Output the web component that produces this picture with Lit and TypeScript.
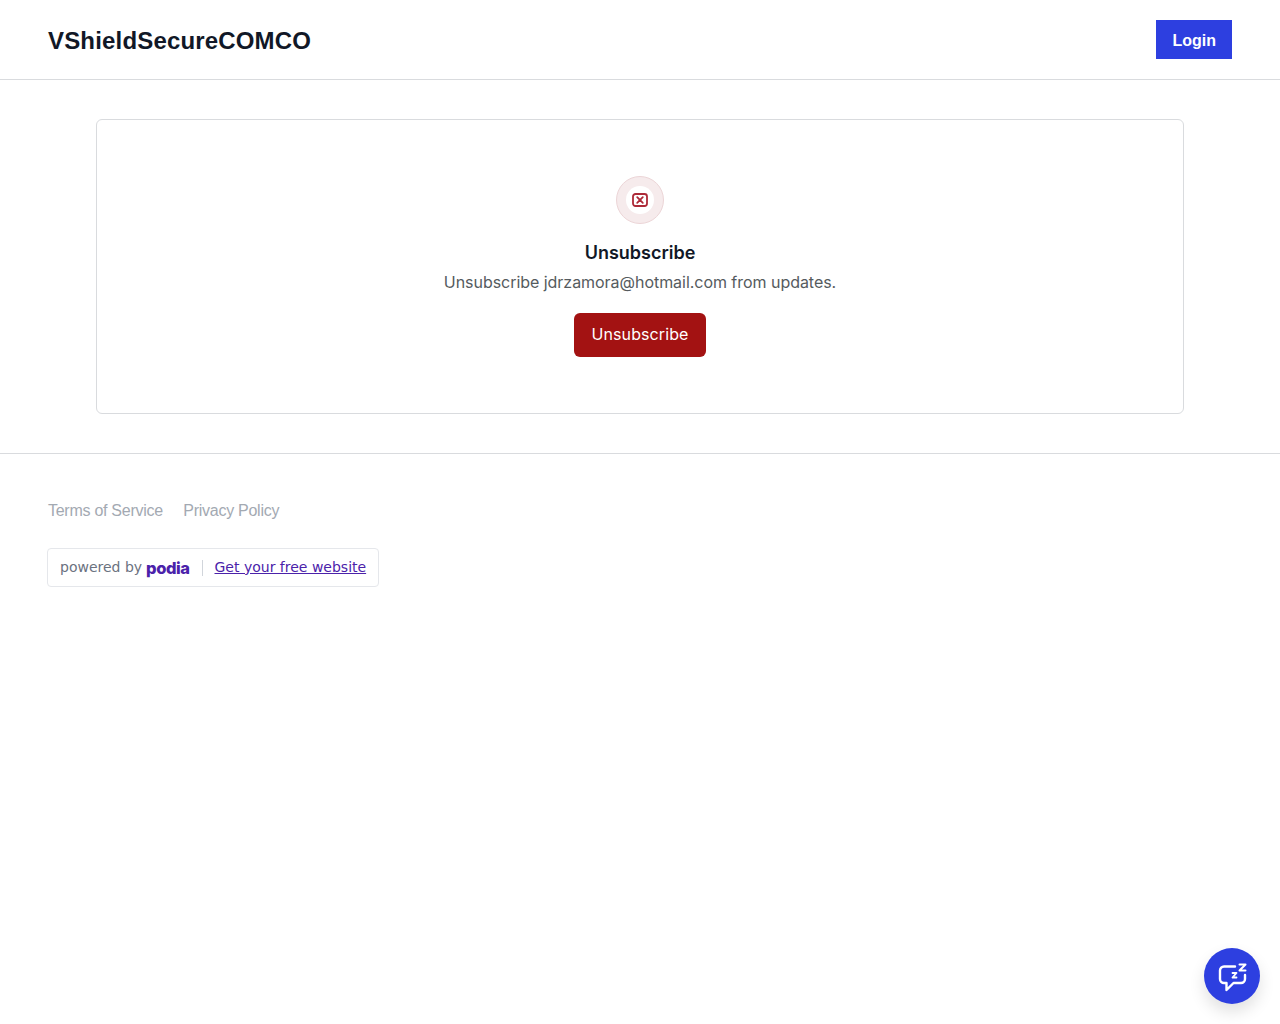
import { LitElement, html, css } from "lit";
import { customElement } from "lit/decorators.js";

@customElement("app-root")
export class AppRoot extends LitElement {
  static styles = css`
    :host { display: block; font-family: Inter, sans-serif; color: #111827; background: #fff; min-height: 1024px; }
    a { text-decoration: none; }
    .header { display: flex; justify-content: space-between; align-items: center; height: 79px; padding: 0 48px; border-bottom: 1px solid #d9dbde; font-family: "Liberation Sans", Arial, sans-serif; }
    .brand { font-size: 24px; font-weight: 700; color: #111827; letter-spacing: 0.17px; padding-top: 2px; }
    .login { display: block; background: #2d3fe0; color: #fff; font-size: 16px; font-weight: 700; line-height: 24px; padding: 9px 16px 6px; }
    .main { padding: 39px 96px; border-bottom: 1px solid #d9dbde; }
    .card { display: flex; flex-direction: column; align-items: center; border: 1px solid #d9dbde; border-radius: 6px; padding: 56px 0; height: 295px; box-sizing: border-box; }
    .ring { width: 48px; height: 48px; box-sizing: border-box; border-radius: 50%; border: 1px solid #ecd5d7; background: #f6ebec; display: flex; align-items: center; justify-content: center; }
    .inner { width: 28px; height: 28px; border-radius: 50%; background: #fff; display: flex; align-items: center; justify-content: center; }
    .inner svg { display: block; }
    h1 { margin: 16px 0 0; font-size: 18px; line-height: 26px; font-weight: 600; color: #111827; }
    .desc { margin: 4px 0 0; font-size: 16px; line-height: 24px; color: #555b5e; letter-spacing: -0.04px; }
    .action { margin-top: 19px; border: 0; background: #a31212; color: #fff; font: 400 16px/24px Inter, sans-serif; letter-spacing: 0.1px; height: 44px; width: 132px; border-radius: 6px; padding: 0 0 2px; }
    .footer { padding: 45px 48px 0; }
    .links { display: flex; gap: 20.5px; font-family: "Liberation Sans", Arial, sans-serif; font-size: 16px; line-height: 24px; letter-spacing: -0.27px; color: #a3a9b2; }
    .links a { color: #a3a9b2; }
    .badge { display: inline-flex; align-items: center; margin: 25px 0 0 -1px; height: 39px; box-sizing: border-box; padding: 0 12px 2px; border: 1px solid #e5e7eb; border-radius: 4px; font-family: "DejaVu Sans", sans-serif; font-size: 14px; color: #6b7280; }
    .podia { font-family: Inter, sans-serif; font-weight: 800; font-size: 16.500px; color: #4b22aa; margin-left: 4px; letter-spacing: -0.45px; position: relative; top: 1px; }
    .sep { width: 1px; height: 16px; background: #d1d5db; margin: 2px 12px 0; }
    .badge a { color: #4b22aa; text-decoration: underline; }
    .chat { position: fixed; right: 20px; bottom: 20px; width: 56px; height: 56px; border-radius: 50%; background: #2d3fe0; display: flex; align-items: center; justify-content: center; box-shadow: 0 8px 16px rgba(0,0,0,0.12); }
  `;

  render() {
    return html`
      <header class="header">
        <div class="brand">VShieldSecureCOMCO</div>
        <a class="login" href="#">Login</a>
      </header>
      <main class="main">
        <section class="card">
          <div class="ring">
            <div class="inner">
              <svg width="16" height="14" viewBox="0 0 16 14" fill="none" stroke="#ad2a38" stroke-width="1.800" stroke-linecap="round">
                <rect x="1" y="1" width="14" height="12" rx="2.500"></rect>
                <path d="M5.200 4.200l5.600 5.600M10.800 4.200l-5.600 5.600"></path>
              </svg>
            </div>
          </div>
          <h1>Unsubscribe</h1>
          <p class="desc">Unsubscribe jdrzamora@hotmail.com from updates.</p>
          <button class="action">Unsubscribe</button>
        </section>
      </main>
      <footer class="footer">
        <div class="links"><a href="#">Terms of Service</a><a href="#">Privacy Policy</a></div>
        <div class="badge">
          <span>powered by</span><span class="podia">podia</span><span class="sep"></span><a href="#">Get your free website</a>
        </div>
      </footer>
      <div class="chat">
        <svg width="32" height="32" viewBox="0 0 32 32" fill="none" stroke="#fff" stroke-width="2.400" stroke-linecap="round" stroke-linejoin="round">
          <path d="M19 6.500H8a4 4 0 0 0-4 4v8.500a4 4 0 0 0 4 4h2.500v7l7-7H25a4 4 0 0 0 4-4v-4"></path>
          <path d="M23.500 4.500h6l-6 6h6" stroke-width="2"></path>
          <path d="M16.500 13h4l-4 4.500h4" stroke-width="1.800"></path>
        </svg>
      </div>
    `;
  }
}
